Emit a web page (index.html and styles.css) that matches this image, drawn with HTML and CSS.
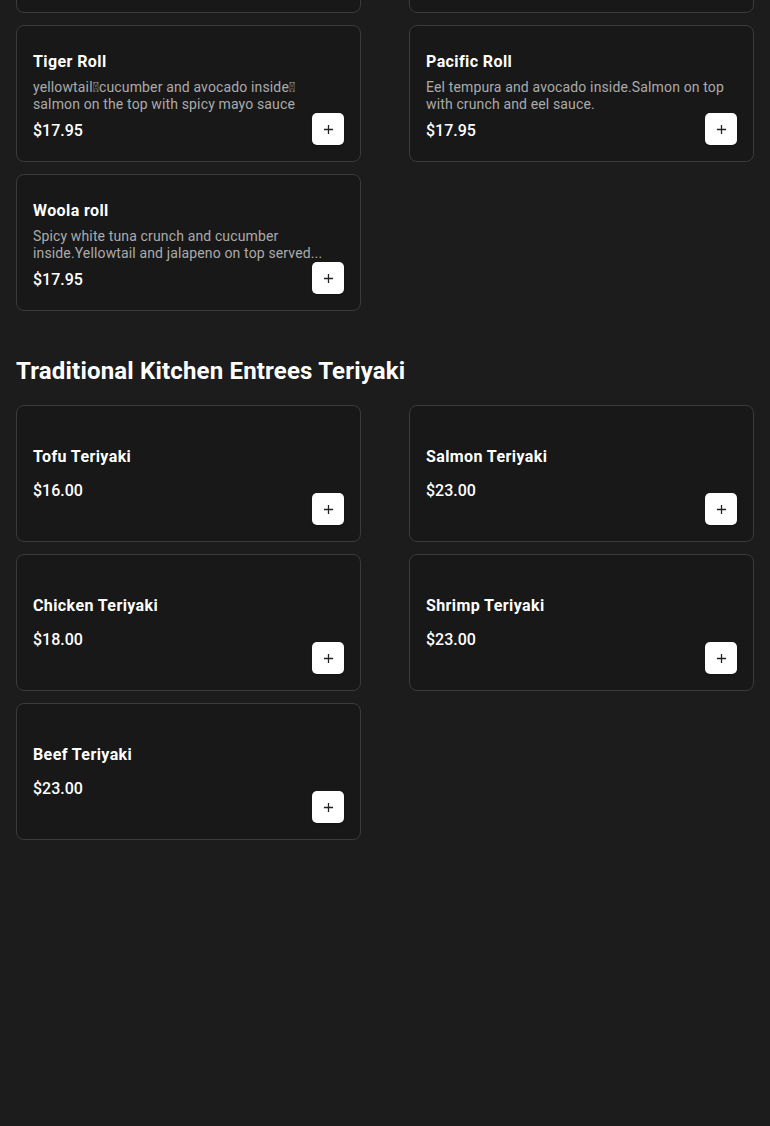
FILE: index.html
```html
<!DOCTYPE html>
<html lang="en">
<head>
<meta charset="utf-8">
<title>Menu</title>
<link rel="stylesheet" href="styles.css">
</head>
<body>
<main class="page">
  <section class="section section-cut">
    <div class="grid">
      <article class="card card-desc"><div class="info"><h3 class="name">Rainbow Roll</h3><p class="desc">Crab meat and avocado inside, assorted fish on top.</p><p class="price">$17.95</p></div><button class="add" aria-label="Add"><svg viewBox="0 0 12 12" width="11" height="11"><path d="M6 1v10M1 6h10" stroke="#222" stroke-width="1.4" fill="none"/></svg></button></article>
      <article class="card card-desc"><div class="info"><h3 class="name">Dragon Roll</h3><p class="desc">Shrimp tempura and cucumber inside, eel and avocado on top.</p><p class="price">$17.95</p></div><button class="add" aria-label="Add"><svg viewBox="0 0 12 12" width="11" height="11"><path d="M6 1v10M1 6h10" stroke="#222" stroke-width="1.4" fill="none"/></svg></button></article>
      <article class="card card-desc"><div class="info"><h3 class="name">Tiger Roll</h3><p class="desc">yellowtail&#xE000;cucumber and avocado inside&#xE000; salmon on the top with spicy mayo sauce</p><p class="price">$17.95</p></div><button class="add" aria-label="Add"><svg viewBox="0 0 12 12" width="11" height="11"><path d="M6 1v10M1 6h10" stroke="#222" stroke-width="1.4" fill="none"/></svg></button></article>
      <article class="card card-desc"><div class="info"><h3 class="name">Pacific Roll</h3><p class="desc">Eel tempura and avocado inside.Salmon on top with crunch and eel sauce.</p><p class="price">$17.95</p></div><button class="add" aria-label="Add"><svg viewBox="0 0 12 12" width="11" height="11"><path d="M6 1v10M1 6h10" stroke="#222" stroke-width="1.4" fill="none"/></svg></button></article>
      <article class="card card-desc"><div class="info"><h3 class="name">Woola roll</h3><p class="desc">Spicy white tuna crunch and cucumber inside.Yellowtail and jalapeno on top served...</p><p class="price">$17.95</p></div><button class="add" aria-label="Add"><svg viewBox="0 0 12 12" width="11" height="11"><path d="M6 1v10M1 6h10" stroke="#222" stroke-width="1.4" fill="none"/></svg></button></article>
    </div>
  </section>

  <section class="section">
    <h2 class="section-title">Traditional Kitchen Entrees Teriyaki</h2>
    <div class="grid">
      <article class="card"><div class="info"><h3 class="name">Tofu Teriyaki</h3><p class="price price-solo">$16.00</p></div><button class="add" aria-label="Add"><svg viewBox="0 0 12 12" width="11" height="11"><path d="M6 1v10M1 6h10" stroke="#222" stroke-width="1.4" fill="none"/></svg></button></article>
      <article class="card"><div class="info"><h3 class="name">Salmon Teriyaki</h3><p class="price price-solo">$23.00</p></div><button class="add" aria-label="Add"><svg viewBox="0 0 12 12" width="11" height="11"><path d="M6 1v10M1 6h10" stroke="#222" stroke-width="1.4" fill="none"/></svg></button></article>
      <article class="card"><div class="info"><h3 class="name">Chicken Teriyaki</h3><p class="price price-solo">$18.00</p></div><button class="add" aria-label="Add"><svg viewBox="0 0 12 12" width="11" height="11"><path d="M6 1v10M1 6h10" stroke="#222" stroke-width="1.4" fill="none"/></svg></button></article>
      <article class="card"><div class="info"><h3 class="name">Shrimp Teriyaki</h3><p class="price price-solo">$23.00</p></div><button class="add" aria-label="Add"><svg viewBox="0 0 12 12" width="11" height="11"><path d="M6 1v10M1 6h10" stroke="#222" stroke-width="1.4" fill="none"/></svg></button></article>
      <article class="card"><div class="info"><h3 class="name">Beef Teriyaki</h3><p class="price price-solo">$23.00</p></div><button class="add" aria-label="Add"><svg viewBox="0 0 12 12" width="11" height="11"><path d="M6 1v10M1 6h10" stroke="#222" stroke-width="1.4" fill="none"/></svg></button></article>
    </div>
  </section>
</main>
</body>
</html>
```

FILE: styles.css
```css
html, body {
  margin: 0;
  padding: 0;
  background: #1c1c1c;
  color: #fff;
  font-family: Roboto, "Liberation Sans", Arial, sans-serif;
}

.page {
  padding: 0 16px;
  overflow: hidden;
  height: 1126px;
  box-sizing: border-box;
}

.section-cut {
  margin-top: -124px;
}

.section-title {
  margin: 44px 0 18px;
  font-size: 24px;
  line-height: 32px;
  font-weight: 700;
  letter-spacing: 0.18px;
}

.grid {
  display: grid;
  grid-template-columns: 345px 345px;
  column-gap: 48px;
  row-gap: 12px;
}

.card {
  display: grid;
  grid-template-columns: 1fr;
  height: 137px;
  box-sizing: border-box;
  padding: 16px;
  background: #181818;
  border: 1px solid #3b3b3b;
  border-radius: 8px;
}

.info {
  grid-area: 1 / 1;
  align-self: center;
  min-width: 0;
}

.card-desc .info {
  margin-top: 6px;
}

.name {
  margin: 0;
  font-size: 16px;
  line-height: 24px;
  font-weight: 700;
  letter-spacing: 0.4px;
}

.desc {
  margin: 5px 0 0;
  font-size: 14px;
  line-height: 17px;
  color: #ababab;
  letter-spacing: 0.14px;
  display: -webkit-box;
  -webkit-line-clamp: 2;
  -webkit-box-orient: vertical;
  overflow: hidden;
}

.price {
  margin: 6px 0 0;
  font-size: 16px;
  line-height: 24px;
  font-weight: 500;
}

.price-solo {
  margin-top: 10px;
}

.add {
  grid-area: 1 / 1;
  align-self: end;
  justify-self: end;
  width: 32px;
  height: 32px;
  padding: 0;
  border: none;
  border-radius: 5px;
  background: #fff;
  display: flex;
  align-items: center;
  justify-content: center;
  box-shadow: 0 1px 2px rgba(0, 0, 0, 0.3);
  cursor: pointer;
}
```
